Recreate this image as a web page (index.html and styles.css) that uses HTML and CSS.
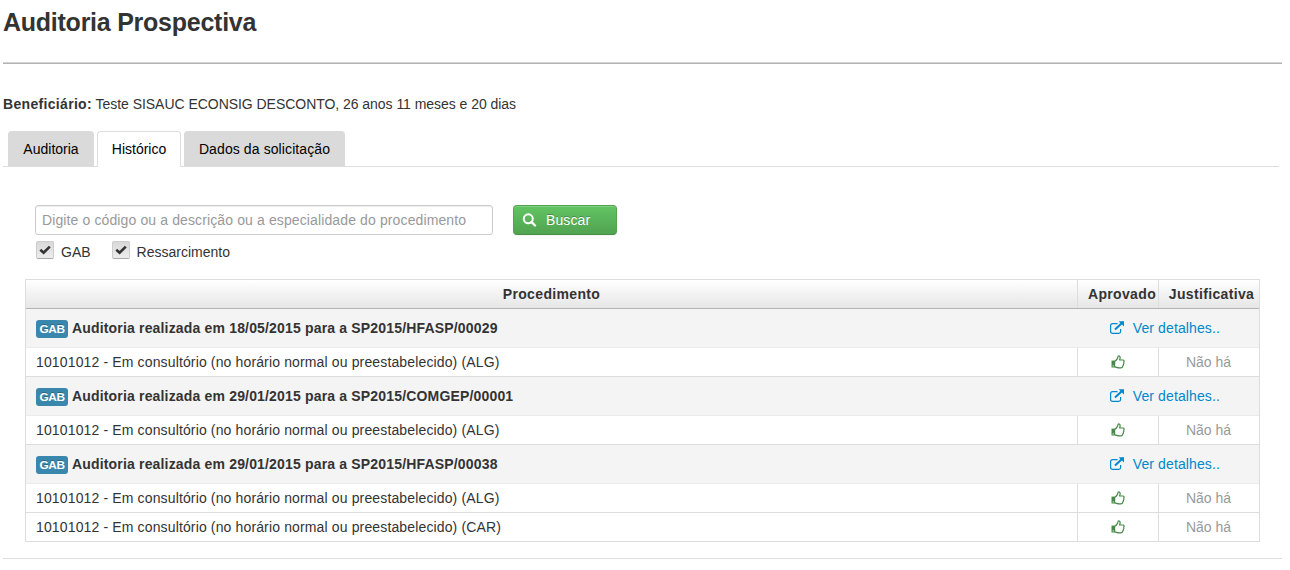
FILE: index.html
```html
<!DOCTYPE html>
<html lang="pt-BR">
<head>
<meta charset="utf-8">
<title>Auditoria Prospectiva</title>
<link rel="stylesheet" href="styles.css">
</head>
<body>
<svg class="defs" width="0" height="0">
  <symbol id="thumb" viewBox="0 0 14 14"><path fill="none" stroke="#468847" stroke-width="1.200" stroke-linejoin="round" d="M3.800 6.200 C5.400 5.600 6 4 6.500 3.300 C7 2.600 6.700 .9 7.600 .9 C9.500 .9 9.400 3 8.600 5 H12 C13.200 5 13.400 6.500 12.700 7.200 C13 8 12.900 8.800 12.400 9.300 C12.500 10.200 12.200 10.800 11.700 11.200 C11.600 12.500 11 12.900 9.800 12.900 H8 C6.300 12.900 5.400 12 3.800 11.900"/><path fill="#468847" d="M.5 5.600 H4.200 V12.500 H.5Z"/><circle cx="2.200" cy="10.900" r=".6" fill="#fff"/></symbol>
  <symbol id="open" viewBox="0 0 14 14"><path fill="none" stroke="#0088cc" stroke-width="1.200" d="M7.500 2.600 H2.700 Q.6 2.600 .6 4.600 V10.600 Q.6 12.400 2.700 12.400 H8.800 Q10.600 12.400 10.600 10.600 V8"/><path fill="none" stroke="#0088cc" stroke-width="2" d="M5 8.500 L12 1.900"/><path fill="#0088cc" d="M8.600 .2 H14 V5.600Z"/></symbol>
  <symbol id="check" viewBox="0 0 12 10"><path fill="none" stroke="#333" stroke-width="2.600" d="M1.300 4.800 L4.600 7.700 L10.800 1.600"/></symbol>
</svg>
<main class="page">
  <h1 class="title">Auditoria Prospectiva</h1>
  <p class="patient"><strong class="patient-label">Beneficiário:</strong> Teste SISAUC ECONSIG DESCONTO, 26 anos 11 meses e 20 dias</p>
  <nav class="tabs">
    <a class="tab tab-first">Auditoria</a>
    <a class="tab tab-active">Histórico</a>
    <a class="tab tab-last">Dados da solicitação</a>
  </nav>
  <section class="panel">
    <div class="search">
      <input class="query" type="text" placeholder="Digite o código ou a descrição ou a especialidade do procedimento">
      <button class="submit" type="button"><svg class="lens" viewBox="0 0 14 14"><circle cx="5.800" cy="5.800" r="4.500" fill="none" stroke="#fff" stroke-width="2"/><path d="M9 9 L12.500 12.500" stroke="#fff" stroke-width="2.400" stroke-linecap="round"/></svg><span>Buscar</span></button>
    </div>
    <div class="filters">
      <label class="filter"><span class="box"><svg class="tick"><use href="#check"/></svg></span>GAB</label>
      <label class="filter"><span class="box"><svg class="tick"><use href="#check"/></svg></span>Ressarcimento</label>
    </div>
    <div class="history">
      <div class="row head"><div class="cell">Procedimento</div><div class="cell head-ok">Aprovado</div><div class="cell head-why">Justificativa</div></div>
      <div class="group first"><span class="badge">GAB</span><strong class="name">Auditoria realizada em 18/05/2015 para a SP2015/HFASP/00029</strong><a class="details"><svg class="icon"><use href="#open"/></svg>Ver detalhes..</a></div>
      <div class="row after"><div class="cell proc">10101012 - Em consultório (no horário normal ou preestabelecido) (ALG)</div><div class="cell"><svg class="icon"><use href="#thumb"/></svg></div><div class="cell none">Não há</div></div>
      <div class="group"><span class="badge">GAB</span><strong class="name">Auditoria realizada em 29/01/2015 para a SP2015/COMGEP/00001</strong><a class="details"><svg class="icon"><use href="#open"/></svg>Ver detalhes..</a></div>
      <div class="row after"><div class="cell proc">10101012 - Em consultório (no horário normal ou preestabelecido) (ALG)</div><div class="cell"><svg class="icon"><use href="#thumb"/></svg></div><div class="cell none">Não há</div></div>
      <div class="group"><span class="badge">GAB</span><strong class="name">Auditoria realizada em 29/01/2015 para a SP2015/HFASP/00038</strong><a class="details"><svg class="icon"><use href="#open"/></svg>Ver detalhes..</a></div>
      <div class="row after"><div class="cell proc">10101012 - Em consultório (no horário normal ou preestabelecido) (ALG)</div><div class="cell"><svg class="icon"><use href="#thumb"/></svg></div><div class="cell none">Não há</div></div>
      <div class="row"><div class="cell proc">10101012 - Em consultório (no horário normal ou preestabelecido) (CAR)</div><div class="cell"><svg class="icon"><use href="#thumb"/></svg></div><div class="cell none">Não há</div></div>
    </div>
  </section>
</main>
</body>
</html>
```
FILE: styles.css
```css
* { box-sizing: border-box; }
body { margin: 0; background: #fff; color: #333; font: 14px/20px "Liberation Sans", Arial, sans-serif; }
.defs { display: block; }
.page { width: 1279px; height: 559px; margin-left: 3px; border-bottom: 1px solid #ddd; }
.title { margin: 0; height: 64px; padding-top: 2px; border-bottom: 1px solid #b3b3b3; box-shadow: inset 0 -1px 0 #d4d4d4; font-size: 25px; letter-spacing: -0.25px; line-height: 40px; }
.patient { margin: 0; padding-top: 30px; height: 67px; white-space: nowrap; letter-spacing: -0.04px; }
.patient-label { letter-spacing: 0.32px; }
.tabs { display: flex; gap: 3px; width: 1276px; height: 36px; padding-left: 5px; border-bottom: 1px solid #ddd; }
.tab { height: 35px; padding: 8px 0; text-align: center; color: #000; background: #dadada; border-radius: 4px 4px 0 0; }
.tab-first { width: 86px; }
.tab-active { width: 84px; height: 36px; padding-top: 7px; background: #fff; border: 1px solid #ddd; border-bottom: 0; }
.tab-last { width: 161px; letter-spacing: 0.1px; }
.panel { padding: 38px 22px 0; }
.search { display: flex; gap: 20px; padding-left: 10px; height: 30px; }
.query { width: 458px; height: 30px; padding: 4px 6px; border: 1px solid #ccc; border-radius: 3px; box-shadow: inset 0 1px 1px rgba(0,0,0,.075); font: inherit; letter-spacing: 0.12px; }
.query::placeholder { color: #999; opacity: 1; }
.submit { display: flex; align-items: center; gap: 9px; width: 104px; height: 30px; padding: 0 0 0 9px; border: 1px solid #51a351; border-color: #4fa04f #51a351 #468d46; border-radius: 4px; background: linear-gradient(#62c462, #51a351); box-shadow: inset 0 1px 0 rgba(255,255,255,.2), 0 1px 2px rgba(0,0,0,.05); color: #fff; font: inherit; letter-spacing: 0.1px; text-shadow: 0 -1px 0 rgba(0,0,0,.25); }
.lens { width: 15px; height: 14px; margin-left: -1px; }
.filters { display: flex; gap: 22px; height: 44px; padding: 6px 0 0 11px; }
.filter { display: flex; gap: 7px; height: 20px; line-height: 22px; }
.filter + .filter { margin-left: -1px; }
.box { display: flex; width: 18px; height: 18px; border: 1px solid #cdcdcd; border-bottom-color: #aaa; border-radius: 2px; background: linear-gradient(#d8d8d8, #ededed); align-items: center; justify-content: center; }
.tick { width: 12px; height: 10px; }
.history { width: 1235px; border: solid #ddd; border-width: 0 1px 1px; }
.row { display: grid; grid-template-columns: 1051px 81px 101px; height: 29px; border-top: 1px solid #ddd; }
.cell { display: flex; align-items: center; justify-content: center; border-left: 1px solid #ddd; white-space: nowrap; }
.cell:first-child { border-left: 0; }
.proc { justify-content: flex-start; padding-left: 10px; letter-spacing: 0.14px; }
.none { color: #999; padding-right: 1px; }
.cell .icon { margin-right: 1px; }
.head { font-weight: bold; letter-spacing: 0.35px; background: linear-gradient(#fff, #e6e6e6); }
.head-ok { padding-left: 8px; }
.head-why { padding-left: 5px; }
.after { border-top-color: #ebebeb; }
.group { display: flex; align-items: center; height: 39px; padding: 0 39px 0 10px; border-top: 1px solid #ddd; background: #f4f4f4; }
.first { border-top-color: #b3b3b3; }
.badge { width: 32px; height: 18px; margin: 1px 4px 0 0; border-radius: 3px; background: #3a87ad; color: #fff; font: bold 11.844px/18px "Liberation Sans", Arial, sans-serif; letter-spacing: -0.4px; text-align: center; text-shadow: 0 -1px 0 rgba(0,0,0,.25); }
.name { white-space: nowrap; letter-spacing: 0.17px; }
.details { display: flex; align-items: center; gap: 9px; margin-left: auto; color: #08c; letter-spacing: 0.12px; }
.icon { width: 14px; height: 14px; }
```
